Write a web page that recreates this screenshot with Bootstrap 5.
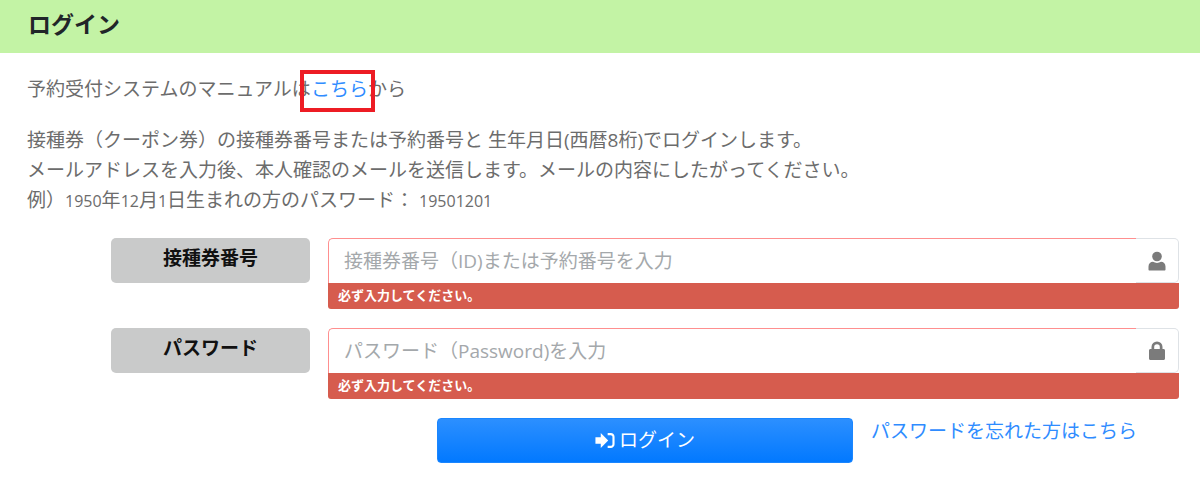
<!DOCTYPE html>
<html lang="ja">

<head>
    <meta charset="UTF-8" />
    <meta name="viewport" content="width=device-width, initial-scale=1.0" />
    <title>ログイン</title>
    <link rel="stylesheet" href="https://cdn.jsdelivr.net/npm/bootstrap@5.3.0/dist/css/bootstrap.min.css" />
    <style>
        body {
            font-family: "Open Sans", "Noto Sans CJK JP", sans-serif;
            font-size: 19px;
            color: #6c6c6c;
            background: #fff;
            overflow: hidden;
        }

        .page-head {
            background: #c3f3a5;
            height: 53px;
            padding: 6px 28px 0;
        }

        .page-head h1 {
            font-size: 23px;
            font-weight: 700;
            line-height: 36px;
            color: #212529;
            margin: 0;
        }

        .page-body {
            padding: 21px 21px 0 27px;
        }

        .manual-line {
            position: relative;
            line-height: 30px;
            margin-bottom: 21px;
        }

        .manual-link,
        .forgot-link {
            color: #2f8cff;
            text-decoration: none;
        }

        .mark-box {
            position: absolute;
            left: 273px;
            top: -4px;
            width: 75px;
            height: 42px;
            border: 4px solid #ed1c24;
        }

        .intro-text {
            line-height: 30px;
            margin-bottom: 22px;
        }

        .intro-text .digits {
            font-size: 16px;
        }

        .form-area {
            padding-left: 84px;
        }

        .login-row {
            display: flex;
            gap: 18px;
            margin-bottom: 19px;
        }

        .field-label {
            width: 199px;
            height: 45px;
            flex-shrink: 0;
            background: #c9caca;
            border-radius: 5px;
            color: #111;
            font-weight: 700;
            font-size: 19px;
            line-height: 40px;
            text-align: center;
        }

        .field-box {
            flex-grow: 1;
        }

        .field-box .input-group {
            height: 45px;
        }

        .field-box .form-control {
            border-color: #ff8f8f;
            border-right: 0;
            border-bottom: 0;
            font-size: 19px;
            color: #495057;
            padding-left: 15px;
            border-radius: 5px 0 0 0;
        }

        .field-box .form-control::placeholder {
            color: #a4a8ab;
        }

        .field-box .input-group-text {
            width: 44px;
            margin-left: 0;
            background: #fff;
            border-color: #dee2e6;
            border-left: 0;
            padding: 0 0 0 12px;
            border-radius: 0 5px 5px 0;
        }

        .field-error {
            background: #d65c4e;
            color: #fff;
            font-size: 13px;
            font-weight: 700;
            height: 26px;
            line-height: 25px;
            padding-left: 10px;
            border-radius: 0 0 3px 3px;
        }

        .action-row {
            display: flex;
            padding-left: 326px;
        }

        .login-btn {
            width: 416px;
            height: 45px;
            flex-shrink: 0;
            border: 1px solid #1a86ff;
            border-radius: 4px;
            background: linear-gradient(#2c8fff, #0279ff);
            color: #fff;
            font-size: 19px;
            padding: 0;
            display: flex;
            align-items: center;
            justify-content: center;
            gap: 4px;
        }

        .forgot-link {
            margin: -2px 0 0 18px;
            line-height: 30px;
        }
    </style>
</head>

<body>
    <div class="page-head">
        <h1>ログイン</h1>
    </div>

    <div class="page-body">
        <p class="manual-line">
            予約受付システムのマニュアルは<a class="manual-link" href="#">こちら</a>から
            <span class="mark-box"></span>
        </p>

        <p class="intro-text">
            接種券（クーポン券）の接種券番号または予約番号と 生年月日(西暦8桁)でログインします。<br>
            メールアドレスを入力後、本人確認のメールを送信します。メールの内容にしたがってください。<br>
            例）<span class="digits">1950</span>年<span class="digits">12</span>月<span class="digits">1</span>日生まれの方のパスワード： <span class="digits">19501201</span>
        </p>

        <form class="form-area">
            <div class="login-row">
                <div class="field-label">接種券番号</div>
                <div class="field-box">
                    <div class="input-group">
                        <input type="text" class="form-control" placeholder="接種券番号（ID)または予約番号を入力">
                        <span class="input-group-text">
                            <svg width="20" height="20" viewBox="0 0 20 20" fill="#7b7b7b">
                                <circle cx="10" cy="5.500" r="4.800" />
                                <path d="M1.500 18.500v-3c0-3 2.200-4.700 4.500-4.700 1.200.7 2.600 1.100 4 1.100s2.800-.4 4-1.100c2.300 0 4.500 1.700 4.500 4.700v3c0 .6-.4 1-1 1h-15c-.6 0-1-.4-1-1z" />
                            </svg>
                        </span>
                    </div>
                    <div class="field-error">必ず入力してください。</div>
                </div>
            </div>

            <div class="login-row">
                <div class="field-label">パスワード</div>
                <div class="field-box">
                    <div class="input-group">
                        <input type="password" class="form-control" placeholder="パスワード（Password)を入力">
                        <span class="input-group-text">
                            <svg width="20" height="20" viewBox="0 0 20 20" fill="#7b7b7b">
                                <path fill-rule="evenodd" d="M4.500 8V6a5.500 5.500 0 0 1 11 0v2h1c.9 0 1.500.6 1.500 1.500v8c0 .9-.6 1.500-1.500 1.500h-13c-.9 0-1.500-.6-1.500-1.500v-8C2 8.600 2.600 8 3.500 8zm2.700 0h5.600V6a2.800 2.800 0 0 0-5.600 0z" />
                            </svg>
                        </span>
                    </div>
                    <div class="field-error">必ず入力してください。</div>
                </div>
            </div>

            <div class="action-row">
                <button type="button" class="login-btn">
                    <svg width="20" height="17" viewBox="0 0 18 16" fill="#fff">
                        <path d="M0 5h5V1L12 8 5 15v-4H0z" />
                        <path d="M11.500 1h3C16.400 1 18 2.600 18 4.500v7c0 1.900-1.600 3.500-3.500 3.500h-3v-2h3c.8 0 1.500-.7 1.500-1.500v-7c0-.8-.7-1.500-1.500-1.500h-3z" />
                    </svg>
                    <span>ログイン</span>
                </button>
                <a class="forgot-link" href="#">パスワードを忘れた方はこちら</a>
            </div>
        </form>
    </div>

    <script src="https://cdn.jsdelivr.net/npm/bootstrap@5.3.0/dist/js/bootstrap.bundle.min.js"></script>
</body>

</html>
